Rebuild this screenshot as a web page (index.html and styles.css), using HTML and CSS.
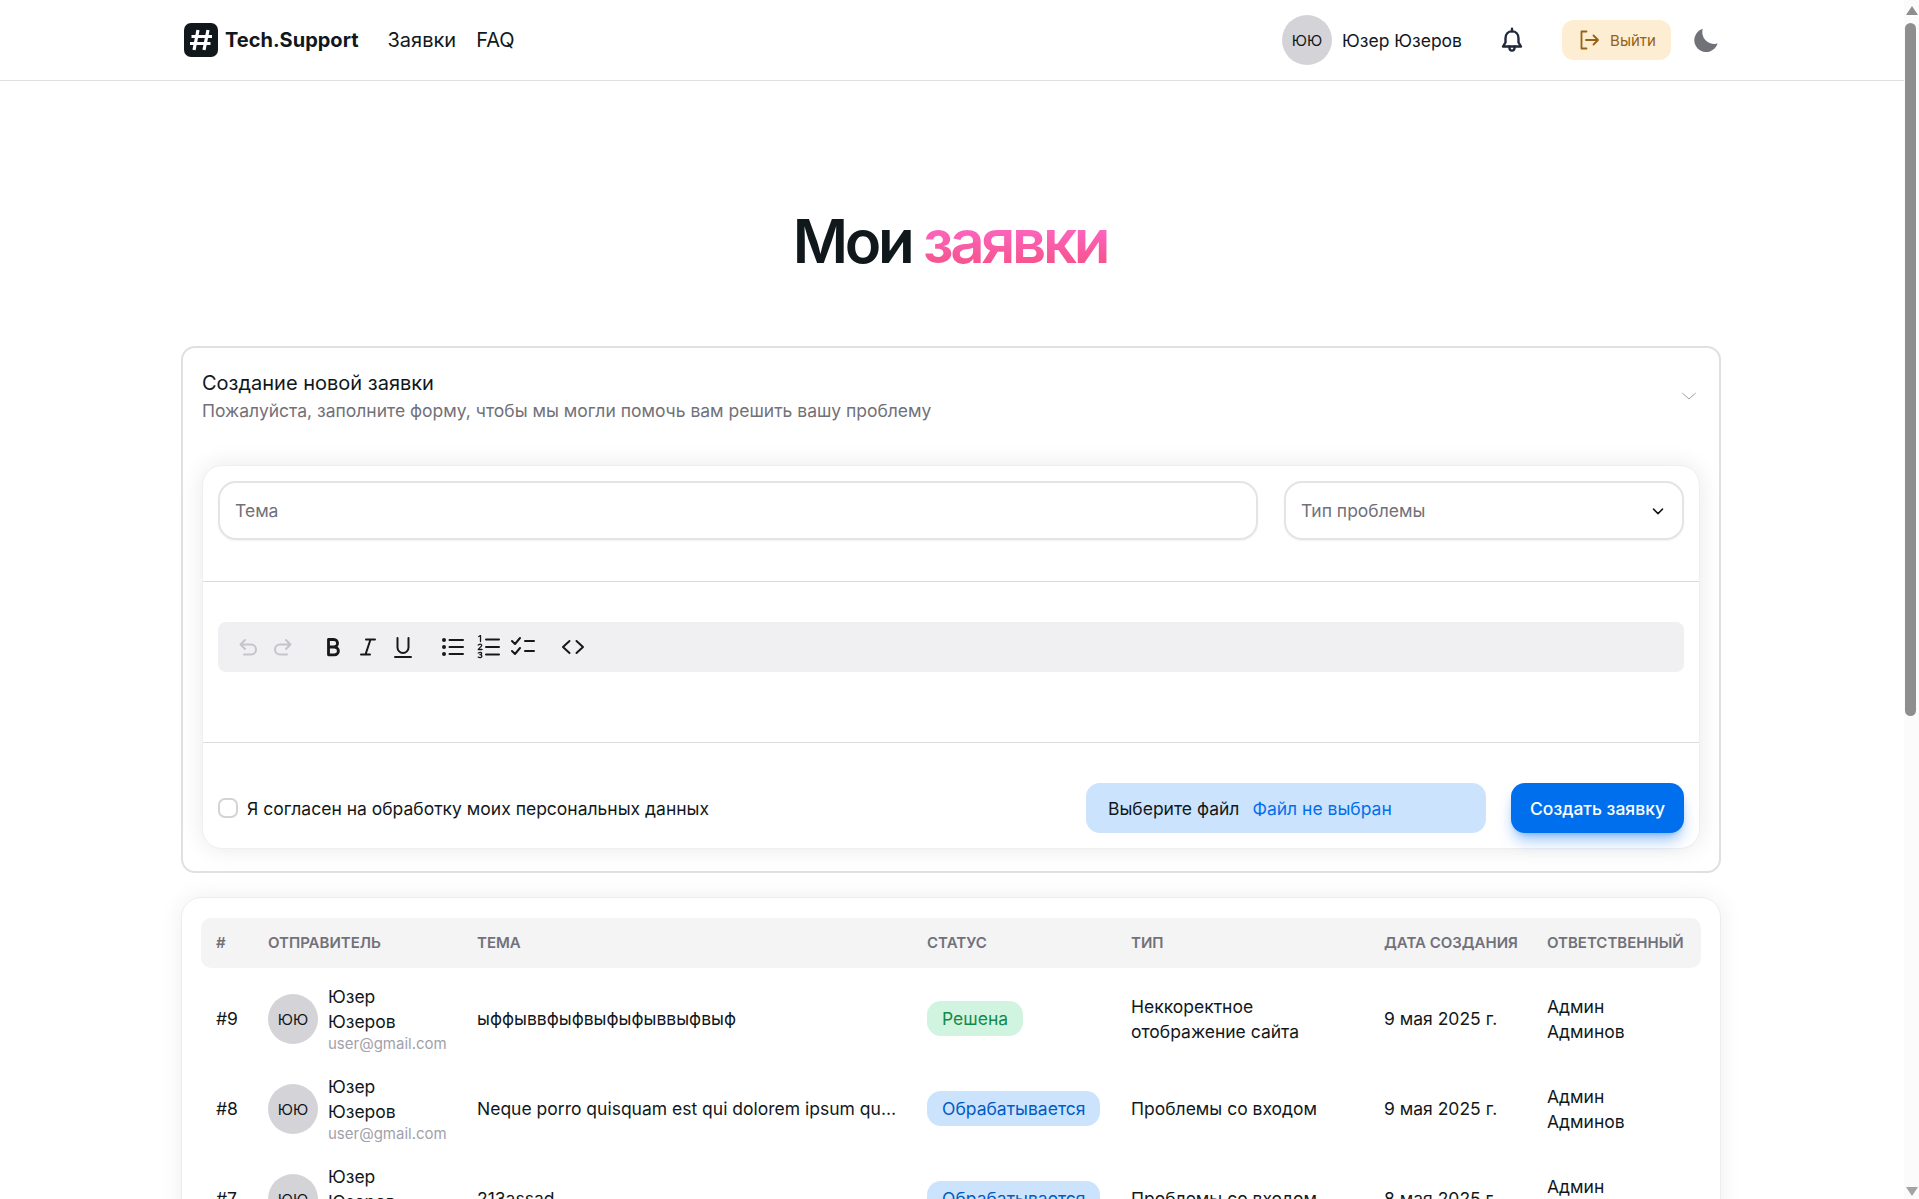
FILE: index.html
```html
<!DOCTYPE html>
<html lang="ru">
<head>
  <meta charset="UTF-8">
  <title>Мои заявки</title>
  <link rel="stylesheet" href="styles.css">
</head>
<body>
  <div class="page">
    <nav class="navbar">
      <div class="navbar-inner">
        <a class="brand">
          <svg class="brand-icon" viewBox="0 0 34 34">
            <rect width="34" height="34" rx="7" fill="#11181c"/>
            <path d="M14 7 10 27M24 7 20 27M7.5 13.5H28M6 20.5H26.5" fill="none" stroke="#fff" stroke-width="3.2"/>
          </svg>
          <span class="brand-name">Tech.Support</span>
        </a>
        <a class="nav-link">Заявки</a>
        <a class="nav-link">FAQ</a>
        <div class="nav-right">
          <div class="user">
            <span class="avatar">ЮЮ</span>
            <span class="user-name">Юзер Юзеров</span>
          </div>
          <svg class="bell" viewBox="0 0 24 24" fill="none" stroke="#1f2937" stroke-width="2.2" stroke-linecap="round" stroke-linejoin="round">
            <path d="M12 4c3.600 0 6 2.800 6 6.400v3.800l2.300 3.800H3.700L6 14.200v-3.800C6 6.800 8.400 4 12 4z"/>
            <path d="M12 1.500V4M9.500 18c0 2.200 1 3.800 2.500 3.800s2.500-1.600 2.500-3.800"/>
          </svg>
          <button class="logout">
            <svg viewBox="0 0 24 24" fill="none" stroke="#936316" stroke-width="1.8" stroke-linecap="round" stroke-linejoin="round">
              <path d="M9.500 3.500H4.500v17h5M9 12h12M16.500 7.500 21 12l-4.500 4.500"/>
            </svg>
            Выйти
          </button>
          <svg class="moon" viewBox="0 0 24 24"><path fill="#71717a" d="M21.500 15.500A11 11 0 0 1 9 1.600 11 11 0 1 0 22.800 15.100a11 11 0 0 1-1.300.400z"/></svg>
        </div>
      </div>
    </nav>

    <main class="content">
      <h1 class="page-title">Мои <span class="accent">заявки</span></h1>

      <section class="create-card">
        <div class="create-head">
          <div>
            <h2>Создание новой заявки</h2>
            <p>Пожалуйста, заполните форму, чтобы мы могли помочь вам решить вашу проблему</p>
          </div>
          <svg class="head-chevron" viewBox="0 0 24 24" fill="none" stroke="#a1a1aa" stroke-width="1.200"><path d="M4 8.500 12 15.500 20 8.500"/></svg>
        </div>

        <form class="form-card">
          <div class="form-top">
            <div class="field field-subject">Тема</div>
            <div class="field field-type">
              Тип проблемы
              <svg viewBox="0 0 24 24" fill="none" stroke="#11181c" stroke-width="2" stroke-linecap="round" stroke-linejoin="round"><path d="M6 9.500l6 6 6-6"/></svg>
            </div>
          </div>
          <div class="form-editor">
            <div class="toolbar">
              <div class="tool-group">
                <span class="tool muted"><svg viewBox="0 0 24 24"><path d="M9 5 4.500 9.500 9 14M4.500 9.500H15a5 5 0 0 1 0 10H8"/></svg></span>
                <span class="tool muted"><svg viewBox="0 0 24 24"><path d="M15 5l4.500 4.500L15 14M19.500 9.500H9a5 5 0 0 0 0 10h7"/></svg></span>
              </div>
              <div class="tool-group">
                <span class="tool"><svg viewBox="0 0 24 24"><path stroke-width="2.800" d="M7.500 4.500h5.300a3.700 3.700 0 0 1 0 7.500H7.500zM7.500 12h6a3.900 3.900 0 0 1 0 7.800h-6z"/></svg></span>
                <span class="tool"><svg viewBox="0 0 24 24"><path d="M10 4.500h9M5 19.500h9M14.500 4.500l-5 15"/></svg></span>
                <span class="tool"><svg viewBox="0 0 24 24"><path d="M6.500 3v9.500a5.500 5.500 0 0 0 11 0V3M4 22h16"/></svg></span>
              </div>
              <div class="tool-group">
                <span class="tool"><svg viewBox="0 0 24 24"><path d="M8.500 5H22M8.500 12H22M8.500 19H22"/><circle class="dot" cx="3" cy="5" r="2"/><circle class="dot" cx="3" cy="12" r="2"/><circle class="dot" cx="3" cy="19" r="2"/></svg></span>
                <span class="tool"><svg viewBox="0 0 24 24"><path d="M10 4.500h13M10 12h13M10 19.500h13"/><path stroke-width="1.300" d="M2.800 1.500 4.500.500v6M2.200 10q2.800-1.800 3.500.200c.3 1-2.500 2.800-3.500 4.300h3.800M2.200 18q3.300-1.500 3.500.300c0 1-1 1.300-1.800 1.300.8 0 2 .4 2 1.500 0 1.800-2.500 2-3.700 1"/></svg></span>
                <span class="tool"><svg viewBox="0 0 24 24"><path d="M1 6l3 3 5-6M1 16l3 3 5-6M14 6h9M14 16h9"/></svg></span>
              </div>
              <div class="tool-group">
                <span class="tool"><svg viewBox="0 0 24 24"><path d="M8.500 6 2 12l6.500 6M15.500 6l6.500 6-6.500 6"/></svg></span>
              </div>
            </div>
          </div>
          <div class="form-bottom">
            <label class="agree"><span class="checkbox"></span>Я согласен на обработку моих персональных данных</label>
            <div class="file-input"><span class="file-btn">Выберите файл</span><span class="file-name">Файл не выбран</span></div>
            <button class="submit" type="button">Создать заявку</button>
          </div>
        </form>
      </section>

      <section class="table-card">
        <table class="tickets">
          <colgroup>
            <col class="c-id"><col class="c-sender"><col class="c-subject"><col class="c-status"><col class="c-type"><col class="c-date"><col class="c-resp">
          </colgroup>
          <thead>
            <tr><th>#</th><th>Отправитель</th><th>Тема</th><th>Статус</th><th>Тип</th><th>Дата создания</th><th>Ответственный</th></tr>
          </thead>
          <tbody>
            <tr>
              <td>#9</td>
              <td><div class="sender"><span class="avatar">ЮЮ</span><div><div class="sender-name">Юзер Юзеров</div><div class="sender-mail">user@gmail.com</div></div></div></td>
              <td><div class="subject">ыффыввфыфвыфыфыввыфвыф</div></td>
              <td><span class="chip chip-done">Решена</span></td>
              <td><div class="lines">Неккоректное отображение сайта</div></td>
              <td>9 мая 2025 г.</td>
              <td><div class="lines resp">Админ Админов</div></td>
            </tr>
            <tr>
              <td>#8</td>
              <td><div class="sender"><span class="avatar">ЮЮ</span><div><div class="sender-name">Юзер Юзеров</div><div class="sender-mail">user@gmail.com</div></div></div></td>
              <td><div class="subject">Neque porro quisquam est qui dolorem ipsum quia dolor sit amet</div></td>
              <td><span class="chip chip-progress">Обрабатывается</span></td>
              <td>Проблемы со входом</td>
              <td>9 мая 2025 г.</td>
              <td><div class="lines resp">Админ Админов</div></td>
            </tr>
            <tr>
              <td>#7</td>
              <td><div class="sender"><span class="avatar">ЮЮ</span><div><div class="sender-name">Юзер Юзеров</div><div class="sender-mail">user@gmail.com</div></div></div></td>
              <td><div class="subject">213assad</div></td>
              <td><span class="chip chip-progress">Обрабатывается</span></td>
              <td>Проблемы со входом</td>
              <td>8 мая 2025 г.</td>
              <td><div class="lines resp">Админ Админов</div></td>
            </tr>
          </tbody>
        </table>
      </section>
    </main>
  </div>

  <div class="scrollbar">
    <span class="arrow-up"></span>
    <div class="track"><div class="thumb"></div></div>
    <span class="arrow-down"></span>
  </div>
</body>
</html>
```

FILE: styles.css
```css
* {
    box-sizing: border-box;
}
html, body {
    height: 100%;
}
body {
    margin: 0;
    display: flex;
    overflow: hidden;
    background: #fff;
    color: #11181c;
    font-family: Inter, 'Noto Sans', sans-serif;
    font-size: 17.5px;
}
.page {
    flex: 1;
    min-width: 0;
    height: 100vh;
    overflow: hidden;
}

/* navbar */
.navbar {
    height: 81px;
    border-bottom: 1px solid #e0e0e2;
}
.navbar-inner {
    height: 100%;
    padding: 0 185px 0 184px;
    display: flex;
    align-items: center;
}
.brand {
    display: flex;
    align-items: center;
    gap: 7px;
    margin-right: 29px;
}
.brand-icon {
    width: 34px;
    height: 34px;
}
.brand-name {
    font-size: 20px;
    font-weight: 700;
}
.nav-link {
    font-size: 20px;
    margin-right: 20px;
}
.nav-right {
    margin-left: auto;
    display: flex;
    align-items: center;
}
.user {
    display: flex;
    align-items: center;
    gap: 10px;
    margin-right: 37px;
}
.avatar {
    flex: none;
    width: 50px;
    height: 50px;
    border-radius: 50%;
    background: #d4d4d8;
    display: flex;
    align-items: center;
    justify-content: center;
    font-size: 15px;
}
.bell {
    width: 26px;
    height: 26px;
    margin-right: 37px;
}
.logout {
    width: 109px;
    height: 40px;
    border: 0;
    border-radius: 12px;
    background: #fdedd3;
    color: #936316;
    font: inherit;
    font-size: 15px;
    display: flex;
    align-items: center;
    justify-content: center;
    gap: 9px;
    margin-right: 22px;
}
.logout svg {
    width: 24px;
    height: 24px;
}
.moon {
    width: 26px;
    height: 26px;
}

/* main */
.content {
    padding: 0 183px 0 181px;
}
.page-title {
    margin: 122px 0 0;
    padding-right: 2px;
    height: 76px;
    text-align: center;
    font-size: 60px;
    line-height: 76px;
    font-weight: 600;
    letter-spacing: -3.4px;
}
.accent {
    background: linear-gradient(180deg, #ff72e1, #f54c7a);
    -webkit-background-clip: text;
    background-clip: text;
    color: transparent;
}
.create-card {
    margin-top: 67px;
    height: 527px;
    border: 2px solid #e0e0e2;
    border-radius: 14px;
    padding: 20px 19px 20px 19px;
}
.create-head {
    display: flex;
    align-items: flex-start;
    justify-content: space-between;
    height: 97px;
}
.create-head h2 {
    margin: 1px 0 0;
    font-size: 20px;
    line-height: 28px;
    font-weight: 400;
}
.create-head p {
    margin: 1px 0 0;
    line-height: 26px;
    color: #71717a;
}
.head-chevron {
    width: 20px;
    height: 20px;
    margin: 18px 1px 0 0;
}
.form-card {
    border-radius: 20px;
    border: 1px solid #efeff0;
    box-shadow: 0 0 24px rgba(0, 0, 0, 0.09);
    background: #fff;
    height: 384px;
}
.form-top {
    height: 116px;
    padding: 15px 15px 0 15px;
    display: flex;
    gap: 26px;
    border-bottom: 1px solid #dcdcdf;
}
.field {
    height: 59px;
    border: 2px solid #e4e4e7;
    border-radius: 18px;
    padding: 0 15px;
    display: flex;
    align-items: center;
    color: #71717a;
    box-shadow: 0 1px 2px rgba(0, 0, 0, 0.05);
}
.field-subject {
    flex: 1;
}
.field-type {
    width: 400px;
    justify-content: space-between;
}
.field-type svg {
    width: 18px;
    height: 18px;
}
.form-editor {
    height: 161px;
    padding: 40px 15px 0;
    border-bottom: 1px solid #dcdcdf;
}
.toolbar {
    height: 50px;
    background: #f0f0f2;
    border-radius: 8px;
    padding: 0 12px;
    display: flex;
    align-items: center;
    gap: 15px;
}
.tool-group {
    display: flex;
}
.tool {
    width: 35px;
    display: flex;
    justify-content: center;
}
.tool svg {
    width: 24px;
    height: 24px;
    fill: none;
    stroke: #18181b;
    stroke-width: 2;
    stroke-linecap: round;
    stroke-linejoin: round;
}
.tool svg .dot {
    fill: #18181b;
    stroke: none;
}
.tool.muted svg {
    stroke: #c4c4cc;
}
.form-bottom {
    padding: 40px 15px 0;
    display: flex;
    align-items: center;
}
.agree {
    display: flex;
    align-items: center;
    gap: 9px;
    margin-right: auto;
}
.checkbox {
    width: 20px;
    height: 20px;
    border: 2px solid #d4d4d8;
    border-radius: 7px;
}
.file-input {
    width: 400px;
    height: 50px;
    border-radius: 14px;
    background: #cce3fd;
    padding: 0 22px;
    display: flex;
    align-items: center;
    gap: 13px;
    margin-right: 25px;
}
.file-name {
    color: #006fee;
}
.submit {
    width: 173px;
    height: 50px;
    border: 0;
    border-radius: 14px;
    background: #006fee;
    color: #fff;
    font: inherit;
    font-weight: 500;
    box-shadow: 0 10px 15px -3px rgba(0, 111, 238, 0.4), 0 4px 6px -4px rgba(0, 111, 238, 0.4);
}

/* table */
.table-card {
    margin-top: 24px;
    height: 400px;
    border: 1px solid #ececee;
    border-radius: 20px;
    box-shadow: 0 0 24px rgba(0, 0, 0, 0.07);
    padding: 20px 19px;
}
.tickets {
    width: 1500px;
    border-collapse: collapse;
    table-layout: fixed;
}
.c-id { width: 52px; }
.c-sender { width: 209px; }
.c-subject { width: 450px; }
.c-status { width: 204px; }
.c-type { width: 253px; }
.c-date { width: 163px; }
.c-resp { width: 169px; }
.tickets th {
    height: 50px;
    background: #f4f4f5;
    color: #71717a;
    font-size: 15px;
    font-weight: 600;
    text-align: left;
    text-transform: uppercase;
    padding: 0 15px 2px;
    white-space: nowrap;
}
.tickets th:first-child {
    border-radius: 10px 0 0 10px;
}
.tickets th:last-child {
    border-radius: 0 10px 10px 0;
}
.tickets td {
    height: 90px;
    padding: 0 15px;
    line-height: 25px;
}
.tickets tbody tr:first-child td {
    height: 95px;
    padding-top: 5px;
}
.sender, .lines {
    margin-top: 2px;
}
.sender {
    display: flex;
    align-items: center;
    gap: 10px;
}
.sender-name {
    width: 85px;
}
.sender-mail {
    font-size: 15px;
    line-height: 20px;
    color: #a1a1aa;
    white-space: nowrap;
}
.subject {
    white-space: nowrap;
    overflow: hidden;
    text-overflow: ellipsis;
}
.resp {
    width: 100px;
}
.chip {
    display: inline-block;
    height: 35px;
    line-height: 35px;
    padding: 0 15px;
    border-radius: 14px;
}
.chip-done {
    background: #d1f4e0;
    color: #138a4a;
}
.chip-progress {
    background: #cce3fd;
    color: #005bc4;
}

/* fake window scrollbar */
.scrollbar {
    flex: none;
    width: 15px;
    height: 100vh;
    background: #fbfbfb;
    display: flex;
    flex-direction: column;
    align-items: center;
}
.arrow-up, .arrow-down {
    flex: none;
    width: 0;
    height: 0;
    border-left: 6px solid transparent;
    border-right: 6px solid transparent;
}
.arrow-up {
    margin-top: 6px;
    border-bottom: 9px solid #8e8e8e;
}
.arrow-down {
    margin: auto 0 3px;
    border-top: 9px solid #a3a3a3;
}
.track {
    flex: 1;
    width: 100%;
    padding: 8px 3px 0 1px;
}
.thumb {
    height: 693px;
    background: #8e8e8e;
    border-radius: 6px;
}
```
